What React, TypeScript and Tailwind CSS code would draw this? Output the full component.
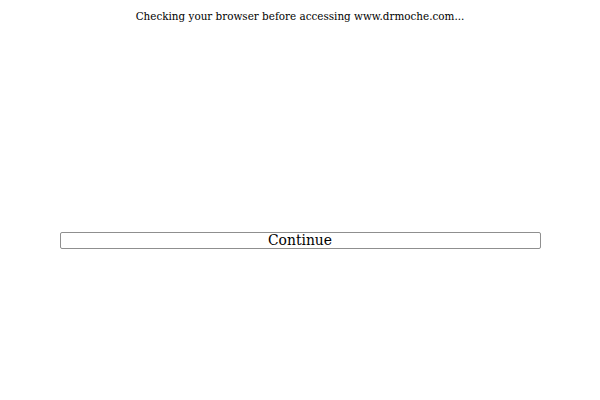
export default function App() {
  return (
    <div className="w-[600px] h-[400px] bg-white flex flex-col items-center font-['DejaVu_Serif',serif]">
      <p className="mt-[10px] text-[10.4px] leading-[13px] text-black">Checking your browser before accessing www.drmoche.com...</p>
      <button className="mt-[209px] w-[481px] h-[17px] border border-[#8f8f8f] rounded-[2px] bg-white text-[13.9px] leading-[15px] text-black flex items-center justify-center font-['DejaVu_Serif',serif]">
        Continue
      </button>
    </div>
  );
}
